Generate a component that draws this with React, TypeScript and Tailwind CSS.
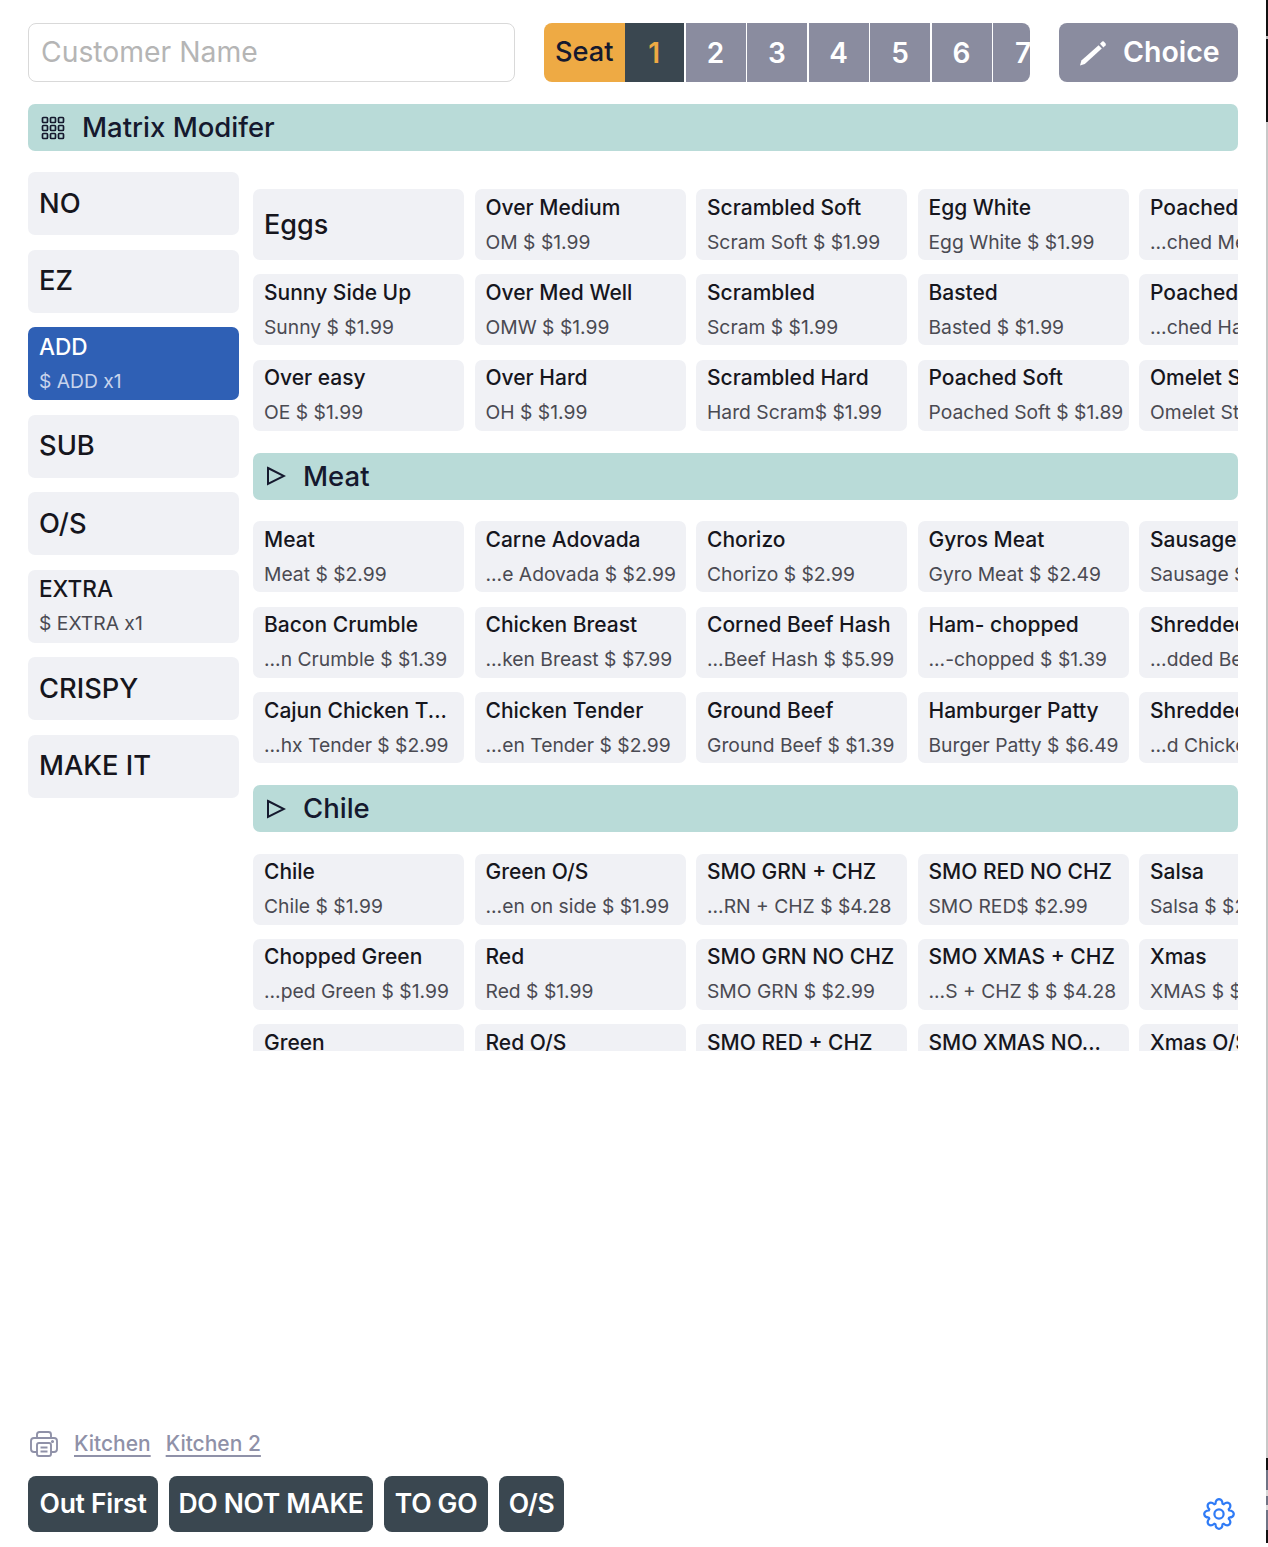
import React from 'react';

interface Item {
  title: string;
  sub?: string;
}

const eggs: Item[][] = [
  [{ title: 'Eggs' }, { title: 'Over Medium', sub: 'OM $ $1.99' }, { title: 'Scrambled Soft', sub: 'Scram Soft $ $1.99' }, { title: 'Egg White', sub: 'Egg White $ $1.99' }, { title: 'Poached Medium', sub: '...ched Medium $ $1.99' }],
  [{ title: 'Sunny Side Up', sub: 'Sunny $ $1.99' }, { title: 'Over Med Well', sub: 'OMW $ $1.99' }, { title: 'Scrambled', sub: 'Scram $ $1.99' }, { title: 'Basted', sub: 'Basted $ $1.99' }, { title: 'Poached Hard', sub: '...ched Hard $ $1.99' }],
  [{ title: 'Over easy', sub: 'OE $ $1.99' }, { title: 'Over Hard', sub: 'OH $ $1.99' }, { title: 'Scrambled Hard', sub: 'Hard Scram$ $1.99' }, { title: 'Poached Soft', sub: 'Poached Soft $ $1.89' }, { title: 'Omelet Style', sub: 'Omelet Style $ $1.99' }],
];

const meat: Item[][] = [
  [{ title: 'Meat', sub: 'Meat $ $2.99' }, { title: 'Carne Adovada', sub: '...e Adovada $ $2.99' }, { title: 'Chorizo', sub: 'Chorizo $ $2.99' }, { title: 'Gyros Meat', sub: 'Gyro Meat $ $2.49' }, { title: 'Sausage', sub: 'Sausage $ $1.99' }],
  [{ title: 'Bacon Crumble', sub: '...n Crumble $ $1.39' }, { title: 'Chicken Breast', sub: '...ken Breast $ $7.99' }, { title: 'Corned Beef Hash', sub: '...Beef Hash $ $5.99' }, { title: 'Ham- chopped', sub: '...-chopped $ $1.39' }, { title: 'Shredded Beef', sub: '...dded Beef $ $2.99' }],
  [{ title: 'Cajun Chicken T...', sub: '...hx Tender $ $2.99' }, { title: 'Chicken Tender', sub: '...en Tender $ $2.99' }, { title: 'Ground Beef', sub: 'Ground Beef $ $1.39' }, { title: 'Hamburger Patty', sub: 'Burger Patty $ $6.49' }, { title: 'Shredded Chicken', sub: '...d Chicken $ $2.99' }],
];

const chile: Item[][] = [
  [{ title: 'Chile', sub: 'Chile $ $1.99' }, { title: 'Green O/S', sub: '...en on side $ $1.99' }, { title: 'SMO GRN + CHZ', sub: '...RN + CHZ $ $4.28' }, { title: 'SMO RED NO CHZ', sub: 'SMO RED$ $2.99' }, { title: 'Salsa', sub: 'Salsa $ $2.99' }],
  [{ title: 'Chopped Green', sub: '...ped Green $ $1.99' }, { title: 'Red', sub: 'Red $ $1.99' }, { title: 'SMO GRN NO CHZ', sub: 'SMO GRN $ $2.99' }, { title: 'SMO XMAS + CHZ', sub: '...S + CHZ $ $ $4.28' }, { title: 'Xmas', sub: 'XMAS $ $1.99' }],
  [{ title: 'Green', sub: 'Green $ $1.99' }, { title: 'Red O/S', sub: 'Red $ $1.99' }, { title: 'SMO RED + CHZ', sub: 'SMO RED $ $4.28' }, { title: 'SMO XMAS NO...', sub: 'SMO XMAS $ $2.99' }, { title: 'Xmas O/S', sub: 'XMAS $ $1.99' }],
];

const sideButtons = [
  { label: 'NO' },
  { label: 'EZ' },
  { label: 'ADD', sub: '$ ADD x1', active: true },
  { label: 'SUB' },
  { label: 'O/S' },
  { label: 'EXTRA', sub: '$ EXTRA x1' },
  { label: 'CRISPY' },
  { label: 'MAKE IT' },
];

const actions = [
  { label: 'Out First', width: 'w-[130px]' },
  { label: 'DO NOT MAKE', width: 'w-[204px]' },
  { label: 'TO GO', width: 'w-[104px]' },
  { label: 'O/S', width: 'w-[65px]' },
];

// window edge showing behind the capture
const edgeStrip = [
  'h-[36px] bg-[#111111]',
  'h-[3px] bg-[#bdbdbd]',
  'h-[83px] bg-[#111111]',
  'h-[1336px] bg-[#c8c8c8]',
  'h-[12px] bg-[#111111]',
  'h-[20px] bg-[#6f7384]',
  'h-[6px] bg-[#d8d8d8]',
  'h-[9px] bg-[#6f7384]',
  'h-[5px] bg-[#d8d8d8]',
  'h-[20px] bg-[#6f7384]',
  'h-[13px] bg-[#111111]',
];

const GridIcon = () => (
  <svg width="24" height="24" viewBox="0 0 24 24" fill="none" stroke="currentColor" strokeWidth="1.7">
    {[1.5, 9.5, 17.5].map((y) =>
      [1.5, 9.5, 17.5].map((x) => <rect key={`${x}-${y}`} x={x} y={y} width="5" height="5" rx="1" />),
    )}
  </svg>
);

const TriangleIcon = () => (
  <svg width="20" height="20" viewBox="0 0 20 20" fill="none" stroke="currentColor" strokeWidth="2" strokeLinejoin="miter">
    <path d="M2 2 L18 10 L2 18 Z" />
  </svg>
);

const PencilIcon = () => (
  <svg width="28" height="26" viewBox="0 0 28 26" fill="currentColor">
    <path d="M1 25.5 L2.4 20.6 L19.6 5.2 L22.8 8.6 L5.8 24 Z" />
    <path d="M21 3.8 L23.2 1.6 Q24 1 24.8 1.6 L26.6 3.6 Q27.2 4.4 26.6 5.2 L24.4 7.4 Z" />
  </svg>
);

const PrinterIcon = () => (
  <svg width="28" height="26" viewBox="0 0 28 26" fill="none" stroke="currentColor" strokeWidth="1.9" strokeLinejoin="round">
    <path d="M7 7 V3.5 Q7 1 9.5 1 H18.5 Q21 1 21 3.5 V7" />
    <path d="M7 21 H4 Q1 21 1 18 V10 Q1 7 4 7 H24 Q27 7 27 10 V18 Q27 21 24 21 H21" />
    <rect x="7" y="12" width="14" height="13" rx="2" />
    <path d="M10.5 16.5 H17.5 M10.5 20.5 H17.5" />
    <circle cx="22.5" cy="10.5" r="0.6" fill="currentColor" />
  </svg>
);

// eight rounded teeth around a ring
const gearPath = () => {
  const pt = (r: number, a: number) => `${(16 + r * Math.cos(a)).toFixed(2)} ${(16 + r * Math.sin(a)).toFixed(2)}`;
  const step = (Math.PI * 2) / 8;
  let d = '';
  for (let i = 0; i < 8; i++) {
    const a = i * step - Math.PI / 2;
    const start = pt(10.8, a - step * 0.42);
    const c1 = pt(14.8, a - step * 0.3);
    const tip = pt(14.8, a);
    const c2 = pt(14.8, a + step * 0.3);
    const end = pt(10.8, a + step * 0.42);
    d += `${i === 0 ? 'M' : 'L'}${start} Q${c1} ${tip} Q${c2} ${end} `;
  }
  return d + 'Z';
};

const GearIcon = () => (
  <svg width="32" height="32" viewBox="0 0 32 32" fill="none" stroke="currentColor" strokeWidth="2.2" strokeLinejoin="round">
    <path d={gearPath()} />
    <circle cx="16" cy="16" r="4.6" />
  </svg>
);

const Card = ({ item }: { item: Item }) => (
  <div className="w-[211px] h-[71px] shrink-0 rounded-[7px] bg-[#f0f1f5] px-[11px] flex flex-col justify-center overflow-hidden whitespace-nowrap">
    {item.sub ? (
      <>
        <div className="text-[21px] leading-[28px] font-[450] text-[#16161d]">{item.title}</div>
        <div className="text-[19.3px] leading-[28px] mt-[6px] text-[#4a4a52]">{item.sub}</div>
      </>
    ) : (
      <div className="text-[27px] leading-[36px] font-[450] text-[#16161d]">{item.title}</div>
    )}
  </div>
);

const Rows = ({ rows }: { rows: Item[][] }) => (
  <div className="flex flex-col gap-[14.45px]">
    {rows.map((row, i) => (
      <div key={i} className="flex gap-[10.5px]">
        {row.map((item) => (
          <Card key={item.title} item={item} />
        ))}
      </div>
    ))}
  </div>
);

const SectionBar = ({ title }: { title: string }) => (
  <div className="h-[47px] shrink-0 rounded-[7px] bg-[#b9dbd8] flex items-center pl-[13px] gap-[17px] text-[#15192e]">
    <TriangleIcon />
    <span className="text-[27.5px] font-medium leading-none">{title}</span>
  </div>
);

export default function App() {
  return (
    <div className="relative w-[1268px] h-[1547px] bg-white overflow-hidden pl-[28px] pr-[30px] pt-[23px] flex flex-col font-['Inter',sans-serif]">
      {/* top row */}
      <div className="flex h-[59px] shrink-0">
        <input
          placeholder="Customer Name"
          className="w-[487px] h-full rounded-lg border border-[#d9d9d9] bg-white px-3 pb-[2px] text-[28.3px] placeholder-[#b5b5b5] outline-none"
        />
        <div className="ml-[29px] w-[486px] h-full flex rounded-lg overflow-hidden">
          <div className="w-[80.5px] shrink-0 bg-[#eeaa44] flex items-center justify-center text-[27.2px] font-medium text-[#15192e]">Seat</div>
          <div className="w-[59.5px] shrink-0 bg-[#3a4750] flex items-center justify-center text-[28px] font-semibold text-[#eeaa44]">1</div>
          {['2', '3', '4', '5', '6', '7'].map((n) => (
            <div key={n} className="w-[60px] ml-[1.5px] shrink-0 bg-[#8a8c9f] flex items-center justify-center text-[28px] font-semibold text-white">{n}</div>
          ))}
        </div>
        <div className="ml-[29px] w-[179px] h-full rounded-lg bg-[#8a8c9f] flex items-center pl-[20px] gap-[16px] text-white">
          <PencilIcon />
          <span className="text-[28.5px] font-semibold">Choice</span>
        </div>
      </div>

      {/* matrix header */}
      <div className="mt-[22px] h-[47px] shrink-0 rounded-[7px] bg-[#b9dbd8] flex items-center pl-[13px] gap-[17px] text-[#15192e]">
        <GridIcon />
        <span className="text-[27.5px] font-medium leading-none">Matrix Modifer</span>
      </div>

      <div className="mt-[21px] flex gap-[14px] items-start">
        {/* modifier column */}
        <div className="w-[211px] shrink-0 flex flex-col gap-[14.5px]">
          {sideButtons.map((b) => (
            <div
              key={b.label}
              className={`rounded-[7px] px-[11px] flex flex-col justify-center ${b.sub ? 'h-[73px]' : 'h-[63px]'} ${b.active ? 'bg-[#2f60b5] text-white' : 'bg-[#f0f1f5] text-[#16161d]'}`}
            >
              {b.sub ? (
                <>
                  <div className={`text-[22.6px] leading-[28px] ${b.active ? 'font-medium' : 'font-[450]'}`}>{b.label}</div>
                  <div className={`text-[19.3px] leading-[28px] mt-[6px] ${b.active ? 'text-[#c8d4ec]' : 'text-[#4a4a52]'}`}>{b.sub}</div>
                </>
              ) : (
                <div className="text-[27.3px] leading-[36px] font-[450]">{b.label}</div>
              )}
            </div>
          ))}
        </div>

        {/* matrix scroller */}
        <div className="w-[985px] h-[879px] overflow-hidden pt-[17px] flex flex-col">
          <Rows rows={eggs} />
          <div className="mt-[22px]"><SectionBar title="Meat" /></div>
          <div className="mt-[21.4px]"><Rows rows={meat} /></div>
          <div className="mt-[22px]"><SectionBar title="Chile" /></div>
          <div className="mt-[21.4px]"><Rows rows={chile} /></div>
        </div>
      </div>

      {/* kitchen printers */}
      <div className="mt-[376px] flex items-center h-[34px] pl-[2px] text-[#8f91a8]">
        <PrinterIcon />
        <span className="ml-[16px] text-[21px] font-medium underline underline-offset-4">Kitchen</span>
        <span className="ml-[15px] text-[21px] font-medium underline underline-offset-4">Kitchen 2</span>
      </div>

      {/* bottom actions */}
      <div className="mt-[15px] flex gap-[11px]">
        {actions.map((a) => (
          <div key={a.label} className={`h-[56px] rounded-lg bg-[#3a4750] flex items-center justify-center text-[26.5px] font-semibold text-white whitespace-nowrap tracking-[-0.3px] ${a.width}`}>{a.label}</div>
        ))}
      </div>
      <div className="absolute left-[1203px] top-[1498px] text-[#2f7bf6]">
        <GearIcon />
      </div>
      <div className="absolute right-0 top-0 w-[2px] flex flex-col">
        {edgeStrip.map((c, i) => (
          <div key={i} className={c} />
        ))}
      </div>
    </div>
  );
}
